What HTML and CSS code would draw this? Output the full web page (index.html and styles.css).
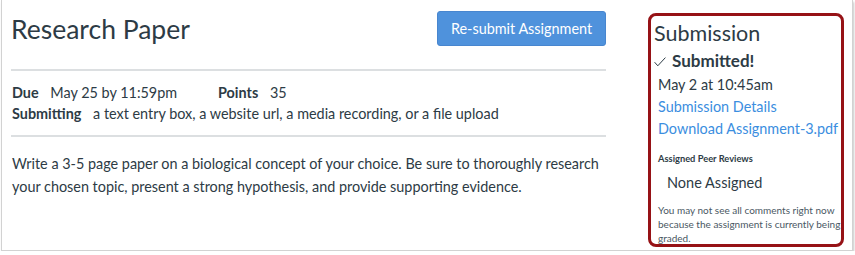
FILE: index.html
```html
<!DOCTYPE html>
<html lang="en">
  <head>
    <meta charset="UTF-8" />
    <title>Research Paper</title>
    <link rel="stylesheet" href="styles.css">
  </head>
  <body>
    <div class="window">
      <main class="assignment">
        <div class="assignment-header">
          <h1 class="assignment-title">Research Paper</h1>
          <button class="resubmit-btn">Re-submit Assignment</button>
        </div>
        <div class="details">
          <div class="detail-row">
            <span class="label">Due</span>
            <span class="value due-value">May 25 by 11:59pm</span>
            <span class="label">Points</span>
            <span class="value">35</span>
          </div>
          <div class="detail-row">
            <span class="label">Submitting</span>
            <span class="value">a text entry box, a website url, a media recording, or a file upload</span>
          </div>
        </div>
        <p class="description">
          Write a 3-5 page paper on a biological concept of your choice. Be sure to thoroughly research
          your chosen topic, present a strong hypothesis, and provide supporting evidence.
        </p>
      </main>

      <aside class="submission">
        <h2 class="submission-title">Submission</h2>
        <div class="submitted">
          <svg class="check" width="12" height="10" viewBox="0 0 12 10">
            <path d="M0.6 5.2 L3.8 8.8 L11.4 0.6" fill="none" stroke="#2d3b45" stroke-width="1" />
          </svg>
          Submitted!
        </div>
        <div class="submission-info">
          <div class="submitted-date">May 2 at 10:45am</div>
          <a href="#" class="submission-link">Submission Details</a>
          <a href="#" class="submission-link">Download Assignment-3.pdf</a>
          <h3 class="peer-title">Assigned Peer Reviews</h3>
          <div class="peer-none">None Assigned</div>
          <p class="note">You may not see all comments right now because the assignment is currently being graded.</p>
        </div>
      </aside>
    </div>
  </body>
</html>
```

FILE: styles.css
```css
:root {
  --text-color: #2d3b45;
  --link-color: #3b8ee0;
  --button-color: #4f92dc;
  --divider-color: #dcdfe1;
  --highlight-color: #961216;
}

* {
  margin: 0;
  padding: 0;
  box-sizing: border-box;
  font-family: Lato, "Liberation Sans", sans-serif;
}

body {
  background: #fff;
  color: var(--text-color);
}

.window {
  width: 852px;
  height: 251px;
  margin-left: 1px;
  border: 1px solid #d2d2d2;
  border-top: none;
  box-shadow: 1px 2px 2px rgba(0, 0, 0, 0.22);
  display: flex;
  overflow: hidden;
}

.assignment {
  width: 604px;
  padding: 11px 0 0 9px;
}

.assignment-header {
  display: flex;
  justify-content: space-between;
  align-items: center;
  height: 35px;
  padding-bottom: 1px;
}

.assignment-title {
  font-size: 26.5px;
  font-weight: 400;
  line-height: 35px;
  margin-top: 2px;
}

.resubmit-btn {
  width: 169px;
  height: 35px;
  background: var(--button-color);
  border: 1px solid #4886cf;
  border-radius: 3px;
  color: #fff;
  font-size: 14.4px;
  cursor: pointer;
}

.details {
  margin-top: 23px;
  border-top: 2px solid var(--divider-color);
  border-bottom: 2px solid var(--divider-color);
  padding: 11px 0 11px 1px;
}

.detail-row {
  font-size: 14.4px;
  line-height: 21px;
  white-space: nowrap;
}

.label {
  font-weight: 700;
}

.value {
  margin-left: 8px;
}

.due-value {
  display: inline-block;
  width: 164px;
}

.description {
  font-size: 14.4px;
  line-height: 23px;
  margin-top: 15px;
  padding-left: 1px;
}

.submission {
  width: 196px;
  height: 234px;
  margin: 13px 0 0 42px;
  border: 3px solid var(--highlight-color);
  border-radius: 8px;
  padding: 4px 0 0 4px;
  overflow: hidden;
}

.submission-title {
  font-size: 21.5px;
  font-weight: 400;
  line-height: 26px;
  margin-left: -1px;
}

.submitted {
  display: flex;
  align-items: center;
  gap: 6px;
  font-size: 17px;
  font-weight: 700;
  line-height: 24px;
  margin-top: 3px;
  margin-left: -1px;
}

.check {
  margin-top: 1px;
}

.submission-info {
  padding-left: 3px;
  white-space: nowrap;
}

.submitted-date {
  font-size: 14.4px;
  line-height: 22px;
  margin-top: 1px;
}

.submission-link {
  display: block;
  color: var(--link-color);
  text-decoration: none;
  font-size: 14.4px;
  line-height: 22px;
}

.submission-link:hover {
  text-decoration: underline;
}

.peer-title {
  font-size: 9.3px;
  font-weight: 700;
  line-height: 14px;
  margin-top: 12px;
}

.peer-none {
  font-size: 14.5px;
  line-height: 22px;
  margin: 6px 0 0 9px;
}

.note {
  font-size: 10px;
  line-height: 14px;
  margin-top: 9px;
  color: #4a5863;
  white-space: normal;
  width: 186px;
}
```
